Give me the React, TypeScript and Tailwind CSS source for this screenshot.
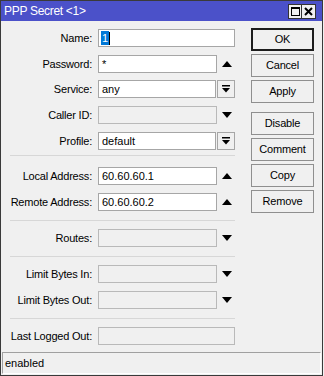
import React from 'react'

type Kind = 'text' | 'up' | 'down' | 'select' | 'wide'

interface FieldProps {
	label: string
	value?: string
	kind: Kind
	disabled?: boolean
	mt: string
	selected?: boolean
}

function UpArrow() {
	return (
		<svg width="10" height="6" viewBox="0 0 10 6" className="block">
			<path d="M0 6 L5 0 L10 6 Z" fill="#000" />
		</svg>
	)
}

function DownArrow() {
	return (
		<svg width="10" height="6" viewBox="0 0 10 6" className="block">
			<path d="M0 0 L10 0 L5 6 Z" fill="#000" />
		</svg>
	)
}

function DropGlyph() {
	return (
		<svg width="8" height="8" viewBox="0 0 8 8" className="block">
			<rect x="0" y="0" width="8" height="1.5" fill="#000" />
			<path d="M0 3 L8 3 L4 7.5 Z" fill="#000" />
		</svg>
	)
}

function Field({ label, value, kind, disabled, mt, selected }: FieldProps) {
	const inputWidth = kind === 'wide' ? 'w-[137px]' : kind === 'select' ? 'w-[118px]' : 'w-[119px]'
	return (
		<div className={`flex items-center h-[18px] ${mt}`}>
			<div className="w-[91px] text-right text-[11px] tracking-[-0.2px] text-[#000] leading-none whitespace-nowrap">
				{label}
			</div>
			<div
				className={`ml-[6px] h-[18px] ${inputWidth} border flex items-center pl-[2px] text-[11px] leading-none ${
					disabled ? 'bg-[#f0f0f0] border-[#b9b9b9]' : 'bg-white border-[#a6a6a6]'
				}`}
			>
				{selected ? (
					<span className="flex items-center">
						<span className="bg-[#0078d7] text-white px-[1px] h-[14px] flex items-center">{value}</span>
						<span className="w-[1px] h-[13px] bg-black" />
					</span>
				) : (
					<span className="pl-[1px]">{value}</span>
				)}
			</div>
			{kind === 'up' && (
				<div className="ml-[5px] w-[10px] flex items-center">
					<UpArrow />
				</div>
			)}
			{kind === 'down' && (
				<div className="ml-[5px] w-[10px] flex items-center">
					<DownArrow />
				</div>
			)}
			{kind === 'select' && (
				<div className="ml-[1px] w-[18px] h-[18px] border border-[#a6a6a6] bg-[#f0f0f0] flex items-center justify-center">
					<DropGlyph />
				</div>
			)}
		</div>
	)
}

function Separator({ mt }: { mt: string }) {
	return <div className={`${mt} ml-[9px] w-[225px] h-[1px] bg-[#d7d7d7]`} />
}

function Btn({ label, mt, primary }: { label: string; mt: string; primary?: boolean }) {
	return (
		<div
			className={`${mt} w-[63px] h-[23px] flex items-center justify-center text-[11px] tracking-[-0.2px] text-black bg-[#f0f0f0] ${
				primary ? 'border-2 border-[#1c1c1c]' : 'border border-[#8f8f8f]'
			}`}
		>
			{label}
		</div>
	)
}

export default function App() {
	return (
		<div className="w-[324px] h-[376px] bg-[#f0f0f0]" style={{ fontFamily: '"Liberation Sans", Arial, sans-serif' }}>
			<div className="w-[323px] h-[376px] border border-[#3a3a3a] flex flex-col bg-[#f0f0f0]">
				{/* barra de título */}
				<div className="h-[20px] bg-[#4b51c9] flex items-center pl-[3px] pr-[6px]">
					<span className="text-white text-[12px] tracking-[-0.3px] leading-none">PPP Secret &lt;1&gt;</span>
					<div className="ml-auto flex">
						<div className="w-[14px] h-[15px] border border-[#333] bg-[#f0f0f0] flex items-center justify-center">
							<div className="w-[9px] h-[9px] border border-black border-t-2" />
						</div>
						<div className="w-[14px] h-[15px] border border-l-0 border-[#333] bg-[#f0f0f0] flex items-center justify-center">
							<svg width="9" height="9" viewBox="0 0 9 9" className="block">
								<path d="M1 1 L8 8 M8 1 L1 8" stroke="#000" strokeWidth="2" />
							</svg>
						</div>
					</div>
				</div>

				<div className="flex flex-1">
					{/* formulário */}
					<div className="flex flex-col pt-[8px] w-[249px]">
						<Field label="Name:" value="1" kind="wide" mt="" selected />
						<Field label="Password:" value="*" kind="up" mt="mt-[8px]" />
						<Field label="Service:" value="any" kind="select" mt="mt-[7px]" />
						<Field label="Caller ID:" kind="down" mt="mt-[8px]" disabled />
						<Field label="Profile:" value="default" kind="select" mt="mt-[8px]" />
						<Separator mt="mt-[5px]" />
						<Field label="Local Address:" value="60.60.60.1" kind="up" mt="mt-[11px]" />
						<Field label="Remote Address:" value="60.60.60.2" kind="up" mt="mt-[8px]" />
						<Separator mt="mt-[9px]" />
						<Field label="Routes:" kind="down" mt="mt-[8px]" disabled />
						<Separator mt="mt-[9px]" />
						<Field label="Limit Bytes In:" kind="down" mt="mt-[8px]" disabled />
						<Field label="Limit Bytes Out:" kind="down" mt="mt-[8px]" disabled />
						<Separator mt="mt-[9px]" />
						<Field label="Last Logged Out:" kind="wide" mt="mt-[8px]" disabled />
					</div>

					{/* botões */}
					<div className="flex flex-col pt-[7px] ml-[1px]">
						<Btn label="OK" mt="" primary />
						<Btn label="Cancel" mt="mt-[3px]" />
						<Btn label="Apply" mt="mt-[3px]" />
						<Btn label="Disable" mt="mt-[9px]" />
						<Btn label="Comment" mt="mt-[3px]" />
						<Btn label="Copy" mt="mt-[3px]" />
						<Btn label="Remove" mt="mt-[3px]" />
					</div>
				</div>

				{/* barra de status */}
				<div className="mx-[1px] mb-[1px] h-[22px] border border-[#a0a0a0] border-r-white border-b-white flex items-center pl-[2px] text-[11px] leading-none">
					enabled
				</div>
			</div>
		</div>
	)
}
